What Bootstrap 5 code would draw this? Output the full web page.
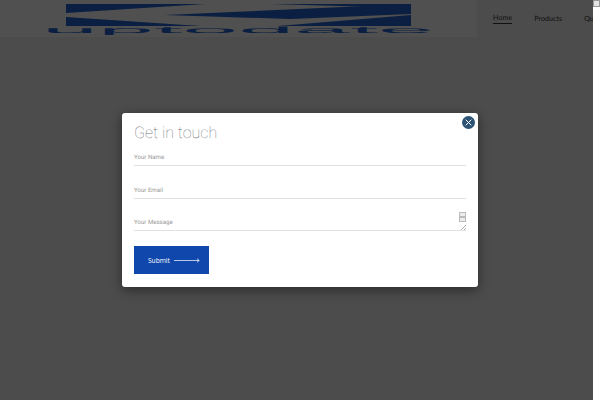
<!DOCTYPE html>
<html><head><meta charset="utf-8">
<link href="https://cdn.jsdelivr.net/npm/bootstrap@5.3.0/dist/css/bootstrap.min.css" rel="stylesheet">
<style>
html,body{height:100%;overflow:hidden;margin:0}
body{background:#4c4c4c;font-family:"Roboto",sans-serif;position:relative;text-rendering:geometricPrecision}
.scroll-strip{position:absolute;top:0;right:0;bottom:0;width:7px;background:#fff;z-index:5}
.scroll-btn{position:absolute;right:0;top:0;width:7px;height:7px;background:#e4e4e4;border:1px solid #999;z-index:6}
.top-bar{height:37px;width:593px;overflow:hidden}
.logo-box{width:477px;height:37px;background:#505050;position:relative;overflow:hidden;flex:none}
.logo-box svg{display:block}
.site-menu{gap:22px;padding-left:16px;white-space:nowrap;font:7.2px "Lato",sans-serif;color:#111;height:37px}
.site-menu a{color:#111;text-decoration:none}
.site-menu .here{border-bottom:1px solid #111;line-height:10px}
.backdrop-wrap{position:absolute;left:122px;top:113px;width:356px;height:174px}
.dialog-box{background:#fff;border-radius:3px;box-shadow:0 3px 12px rgba(0,0,0,.45);padding:10px 12px 13px;height:100%}
.dialog-title{font:100 16px/20px "Roboto",sans-serif;color:#6f757b;margin:0}
.entry{height:23px;border-bottom:1px solid #e2e2e2;margin-bottom:9.5px;width:332px;font:6.1px/8px "Roboto",sans-serif;color:#999;padding-top:11px}
.entry-msg{position:relative;margin-bottom:15px}
.send-btn{width:75px;height:28px;background:#0f47ad;color:#fff;border:0;border-radius:0;font:500 6.6px "Open Sans",sans-serif;gap:4px;padding:0 0 0 14px}
.close-round{position:absolute;top:3px;right:3px;width:13px;height:13px;border-radius:50%;background:#2d5475;border:0;padding:0}
.spin{position:absolute;right:0;top:4px;width:7px}
.spin i{display:block;height:5px;background:#ececec;border:1px solid #bbb;margin-bottom:0}
.grip{position:absolute;right:0;bottom:0}
</style></head><body>
<div class="top-bar d-flex">
 <div class="logo-box">
 <svg width="477" height="37" viewBox="0 0 477 37">
  <path d="M66 4H205L66 13Z" fill="#0a1f42"/><path d="M66 17L200 26H66Z" fill="#0a1f42"/>
  <path d="M165 15L411 4V14L290 19Z" fill="#0a1f42"/><path d="M270 4H411V8Z" fill="#0a1f42"/>
  <path d="M278 26L411 15V26Z" fill="#0a1f42"/>
  <text x="238" y="33" text-anchor="middle" textLength="392" lengthAdjust="spacingAndGlyphs" font-family="Liberation Sans" font-size="9" fill="#0a1f42">uptodate</text>
 </svg>
 </div>
 <div class="site-menu d-flex align-items-center">
  <a href="#" class="here">Home</a><a href="#">Products</a><a href="#">Quality</a>
 </div>
</div>
<div class="scroll-strip"></div><div class="scroll-btn"></div>
<div class="backdrop-wrap">
 <div class="dialog-box">
  <h2 class="dialog-title">Get in touch</h2>
  <div class="entry">Your Name</div>
  <div class="entry">Your Email</div>
  <div class="entry entry-msg">Your Message
   <div class="spin"><i></i><i></i></div>
   <svg class="grip" width="5" height="5" viewBox="0 0 5 5"><path d="M0 5L5 0M3 5L5 3" stroke="#888" stroke-width=".7"/></svg>
  </div>
  <button class="send-btn btn d-flex align-items-center">Submit
   <svg width="26" height="5" viewBox="0 0 26 5"><path d="M0 2.5H25M23 .7L25.3 2.5L23 4.3" stroke="#fff" stroke-width=".7" fill="none"/></svg>
  </button>
 </div>
 <button class="close-round d-flex align-items-center justify-content-center" aria-label="Close">
  <svg width="7" height="7" viewBox="0 0 7 7"><path d="M.7 .7L6.3 6.3M6.3 .7L.7 6.3" stroke="#fff" stroke-width="1"/></svg>
 </button>
</div>
</body></html>
